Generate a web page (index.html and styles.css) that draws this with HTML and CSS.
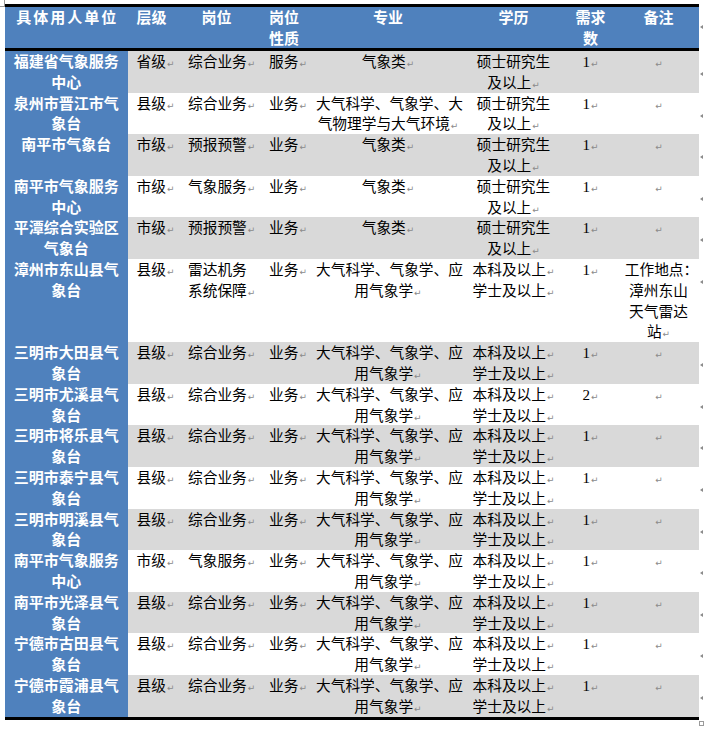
FILE: index.html
```html
<!DOCTYPE html>
<html lang="zh-CN">
<head>
<meta charset="utf-8">
<title>招聘岗位表</title>
<link rel="stylesheet" href="styles.css">
</head>
<body>
<div class="sheet">
  <span class="handle-tl"></span>
  <table class="jobs">
    <colgroup>
      <col class="c1"><col class="c2"><col class="c3"><col class="c4"><col class="c5"><col class="c6"><col class="c7"><col class="c8"><col class="cx">
    </colgroup>
    <thead>
      <tr>
        <th class="hd wide">具体用人单位</th>
        <th class="hd hl2">层级</th>
        <th class="hd h3">岗位</th>
        <th class="hd hl4">岗位<br>性质</th>
        <th class="hd">专业</th>
        <th class="hd">学历</th>
        <th class="hd">需求<br>数</th>
        <th class="hd">备注</th>
        <td class="re"><i class="rm"></i></td>
      </tr>
    </thead>
    <tbody>
      <tr class="g">
        <th class="unit">福建省气象服务<br>中心</th>
        <td class="lv">省级<span class="pm">↵</span></td>
        <td class="l">综合业务<span class="pm">↵</span></td>
        <td class="l">服务<span class="pm">↵</span></td>
        <td class="c">气象类<span class="pm">↵</span></td>
        <td class="c">硕士研究生<br>及以上<span class="pm">↵</span></td>
        <td class="c"><span class="num">1</span><span class="pm">↵</span></td>
        <td class="c"><span class="pm">↵</span></td>
        <td class="re"><i class="rm"></i></td>
      </tr>
      <tr>
        <th class="unit">泉州市晋江市气<br>象台</th>
        <td class="lv">县级<span class="pm">↵</span></td>
        <td class="l">综合业务<span class="pm">↵</span></td>
        <td class="l">业务<span class="pm">↵</span></td>
        <td class="c">大气科学、气象学、大<br>气物理学与大气环境<span class="pm">↵</span></td>
        <td class="c">硕士研究生<br>及以上<span class="pm">↵</span></td>
        <td class="c"><span class="num">1</span><span class="pm">↵</span></td>
        <td class="c"><span class="pm">↵</span></td>
        <td class="re"><i class="rm"></i></td>
      </tr>
      <tr class="g">
        <th class="unit">南平市气象台</th>
        <td class="lv">市级<span class="pm">↵</span></td>
        <td class="l">预报预警<span class="pm">↵</span></td>
        <td class="l">业务<span class="pm">↵</span></td>
        <td class="c">气象类<span class="pm">↵</span></td>
        <td class="c">硕士研究生<br>及以上<span class="pm">↵</span></td>
        <td class="c"><span class="num">1</span><span class="pm">↵</span></td>
        <td class="c"><span class="pm">↵</span></td>
        <td class="re"><i class="rm"></i></td>
      </tr>
      <tr>
        <th class="unit">南平市气象服务<br>中心</th>
        <td class="lv">市级<span class="pm">↵</span></td>
        <td class="l">气象服务<span class="pm">↵</span></td>
        <td class="l">业务<span class="pm">↵</span></td>
        <td class="c">气象类<span class="pm">↵</span></td>
        <td class="c">硕士研究生<br>及以上<span class="pm">↵</span></td>
        <td class="c"><span class="num">1</span><span class="pm">↵</span></td>
        <td class="c"><span class="pm">↵</span></td>
        <td class="re"><i class="rm"></i></td>
      </tr>
      <tr class="g">
        <th class="unit">平潭综合实验区<br>气象台</th>
        <td class="lv">市级<span class="pm">↵</span></td>
        <td class="l">预报预警<span class="pm">↵</span></td>
        <td class="l">业务<span class="pm">↵</span></td>
        <td class="c">气象类<span class="pm">↵</span></td>
        <td class="c">硕士研究生<br>及以上<span class="pm">↵</span></td>
        <td class="c"><span class="num">1</span><span class="pm">↵</span></td>
        <td class="c"><span class="pm">↵</span></td>
        <td class="re"><i class="rm"></i></td>
      </tr>
      <tr>
        <th class="unit">漳州市东山县气<br>象台</th>
        <td class="lv">县级<span class="pm">↵</span></td>
        <td class="l">雷达机务<br>系统保障<span class="pm">↵</span></td>
        <td class="l">业务<span class="pm">↵</span></td>
        <td class="c">大气科学、气象学、应<br>用气象学<span class="pm">↵</span></td>
        <td class="c">本科及以上<span class="pm">↵</span><br>学士及以上<span class="pm">↵</span></td>
        <td class="c"><span class="num">1</span><span class="pm">↵</span></td>
        <td class="c">工作地点<span class="colon">：</span><br>漳州东山<br>天气雷达<br>站<span class="pm">↵</span></td>
        <td class="re"><i class="rm"></i></td>
      </tr>
      <tr class="g">
        <th class="unit">三明市大田县气<br>象台</th>
        <td class="lv">县级<span class="pm">↵</span></td>
        <td class="l">综合业务<span class="pm">↵</span></td>
        <td class="l">业务<span class="pm">↵</span></td>
        <td class="c">大气科学、气象学、应<br>用气象学<span class="pm">↵</span></td>
        <td class="c">本科及以上<span class="pm">↵</span><br>学士及以上<span class="pm">↵</span></td>
        <td class="c"><span class="num">1</span><span class="pm">↵</span></td>
        <td class="c"><span class="pm">↵</span></td>
        <td class="re"><i class="rm"></i></td>
      </tr>
      <tr>
        <th class="unit">三明市尤溪县气<br>象台</th>
        <td class="lv">县级<span class="pm">↵</span></td>
        <td class="l">综合业务<span class="pm">↵</span></td>
        <td class="l">业务<span class="pm">↵</span></td>
        <td class="c">大气科学、气象学、应<br>用气象学<span class="pm">↵</span></td>
        <td class="c">本科及以上<span class="pm">↵</span><br>学士及以上<span class="pm">↵</span></td>
        <td class="c"><span class="num">2</span><span class="pm">↵</span></td>
        <td class="c"><span class="pm">↵</span></td>
        <td class="re"><i class="rm"></i></td>
      </tr>
      <tr class="g">
        <th class="unit">三明市将乐县气<br>象台</th>
        <td class="lv">县级<span class="pm">↵</span></td>
        <td class="l">综合业务<span class="pm">↵</span></td>
        <td class="l">业务<span class="pm">↵</span></td>
        <td class="c">大气科学、气象学、应<br>用气象学<span class="pm">↵</span></td>
        <td class="c">本科及以上<span class="pm">↵</span><br>学士及以上<span class="pm">↵</span></td>
        <td class="c"><span class="num">1</span><span class="pm">↵</span></td>
        <td class="c"><span class="pm">↵</span></td>
        <td class="re"><i class="rm"></i></td>
      </tr>
      <tr>
        <th class="unit">三明市泰宁县气<br>象台</th>
        <td class="lv">县级<span class="pm">↵</span></td>
        <td class="l">综合业务<span class="pm">↵</span></td>
        <td class="l">业务<span class="pm">↵</span></td>
        <td class="c">大气科学、气象学、应<br>用气象学<span class="pm">↵</span></td>
        <td class="c">本科及以上<span class="pm">↵</span><br>学士及以上<span class="pm">↵</span></td>
        <td class="c"><span class="num">1</span><span class="pm">↵</span></td>
        <td class="c"><span class="pm">↵</span></td>
        <td class="re"><i class="rm"></i></td>
      </tr>
      <tr class="g">
        <th class="unit">三明市明溪县气<br>象台</th>
        <td class="lv">县级<span class="pm">↵</span></td>
        <td class="l">综合业务<span class="pm">↵</span></td>
        <td class="l">业务<span class="pm">↵</span></td>
        <td class="c">大气科学、气象学、应<br>用气象学<span class="pm">↵</span></td>
        <td class="c">本科及以上<span class="pm">↵</span><br>学士及以上<span class="pm">↵</span></td>
        <td class="c"><span class="num">1</span><span class="pm">↵</span></td>
        <td class="c"><span class="pm">↵</span></td>
        <td class="re"><i class="rm"></i></td>
      </tr>
      <tr>
        <th class="unit">南平市气象服务<br>中心</th>
        <td class="lv">市级<span class="pm">↵</span></td>
        <td class="l">气象服务<span class="pm">↵</span></td>
        <td class="l">业务<span class="pm">↵</span></td>
        <td class="c">大气科学、气象学、应<br>用气象学<span class="pm">↵</span></td>
        <td class="c">本科及以上<span class="pm">↵</span><br>学士及以上<span class="pm">↵</span></td>
        <td class="c"><span class="num">1</span><span class="pm">↵</span></td>
        <td class="c"><span class="pm">↵</span></td>
        <td class="re"><i class="rm"></i></td>
      </tr>
      <tr class="g">
        <th class="unit">南平市光泽县气<br>象台</th>
        <td class="lv">县级<span class="pm">↵</span></td>
        <td class="l">综合业务<span class="pm">↵</span></td>
        <td class="l">业务<span class="pm">↵</span></td>
        <td class="c">大气科学、气象学、应<br>用气象学<span class="pm">↵</span></td>
        <td class="c">本科及以上<span class="pm">↵</span><br>学士及以上<span class="pm">↵</span></td>
        <td class="c"><span class="num">1</span><span class="pm">↵</span></td>
        <td class="c"><span class="pm">↵</span></td>
        <td class="re"><i class="rm"></i></td>
      </tr>
      <tr>
        <th class="unit">宁德市古田县气<br>象台</th>
        <td class="lv">县级<span class="pm">↵</span></td>
        <td class="l">综合业务<span class="pm">↵</span></td>
        <td class="l">业务<span class="pm">↵</span></td>
        <td class="c">大气科学、气象学、应<br>用气象学<span class="pm">↵</span></td>
        <td class="c">本科及以上<span class="pm">↵</span><br>学士及以上<span class="pm">↵</span></td>
        <td class="c"><span class="num">1</span><span class="pm">↵</span></td>
        <td class="c"><span class="pm">↵</span></td>
        <td class="re"><i class="rm"></i></td>
      </tr>
      <tr class="g last">
        <th class="unit">宁德市霞浦县气<br>象台</th>
        <td class="lv">县级<span class="pm">↵</span></td>
        <td class="l">综合业务<span class="pm">↵</span></td>
        <td class="l">业务<span class="pm">↵</span></td>
        <td class="c">大气科学、气象学、应<br>用气象学<span class="pm">↵</span></td>
        <td class="c">本科及以上<span class="pm">↵</span><br>学士及以上<span class="pm">↵</span></td>
        <td class="c"><span class="num">1</span><span class="pm">↵</span></td>
        <td class="c"><span class="pm">↵</span></td>
        <td class="re"><i class="rm"></i></td>
      </tr>
    </tbody>
  </table>
  <span class="handle-br"></span>
</div>
</body>
</html>
```

FILE: styles.css
```css
html, body {
  margin: 0;
  padding: 0;
  background: #ffffff;
}
body {
  width: 704px;
  height: 729px;
  overflow: hidden;
  font-family: "Noto Sans CJK SC", "Noto Sans", sans-serif;
  color: #000;
}
.sheet {
  position: relative;
  padding: 4px 0 0 5px;
}
.jobs {
  border-collapse: separate;
  border-spacing: 0;
  table-layout: fixed;
  width: 699px;
}
.c1 { width: 122.5px; }
.c2 { width: 53.5px; }
.c3 { width: 81px; }
.c4 { width: 50px; }
.c5 { width: 152px; }
.c6 { width: 99px; }
.c7 { width: 55px; }
.c8 { width: 81px; }
.cx { width: 5px; }

.jobs th,
.jobs td {
  padding: 0 7px;
  vertical-align: top;
  white-space: nowrap;
  font-size: 14.7px;
  line-height: 20.8px;
  font-weight: 400;
}

/* header */
.jobs th.hd {
  background: #4f81bd;
  color: #ffffff;
  font-weight: 700;
  font-size: 15px;
  line-height: 20.5px;
  text-align: center;
  border-top: 3px solid #000000;
  border-bottom: 3px solid #000000;
  padding: 0;
}
.jobs th.wide { letter-spacing: 2px; text-indent: 2px; }
.jobs th.hl2 { text-align: left; padding-left: 9px; }
.jobs th.h3 { padding-right: 10px; }
.jobs th.hl4 { text-align: left; padding-left: 7px; }

/* unit column */
.jobs th.unit {
  background: #4f81bd;
  color: #ffffff;
  font-weight: 700;
  font-size: 15px;
  text-align: center;
  padding: 0;
}

/* data */
.jobs tr.g td { background: #d9d9d9; }
.jobs td.lv { text-align: left; padding-left: 9px; }
.jobs td.l { text-align: left; }
.jobs td.c { text-align: center; padding: 0 4px; }
.jobs tr.last th,
.jobs tr.last td { border-bottom: 3px solid #000000; }

.num {
  font-family: "Liberation Serif", serif;
  font-size: 15px;
  line-height: 0;
}
.colon {
  letter-spacing: -6px;
}
.pm {
  font-family: "DejaVu Sans", sans-serif;
  font-size: 9px;
  line-height: 0;
  color: #8a8a8a;
  margin-left: 1px;
}

/* row end markers outside the table (clipped at page edge) */
.jobs td.re,
.jobs tr.g td.re,
.jobs tr.last td.re {
  background: none;
  border: none;
  padding: 21px 0 0 1px;
  line-height: 0;
  font-size: 0;
  overflow: visible;
}
.rm {
  display: inline-block;
  width: 0;
  height: 0;
  border-top: 2.5px solid transparent;
  border-bottom: 2.5px solid transparent;
  border-right: 3.5px solid #8a8a8a;
}

/* word table handles */
.handle-tl {
  position: absolute;
  left: -4px;
  top: -2px;
  width: 7px;
  height: 7px;
  border: 1px solid #9a9a9a;
  background: #fff;
}
.handle-br {
  position: absolute;
  left: 699px;
  top: 721px;
  width: 3px;
  height: 3px;
  border: 1px solid #9a9a9a;
}
```
